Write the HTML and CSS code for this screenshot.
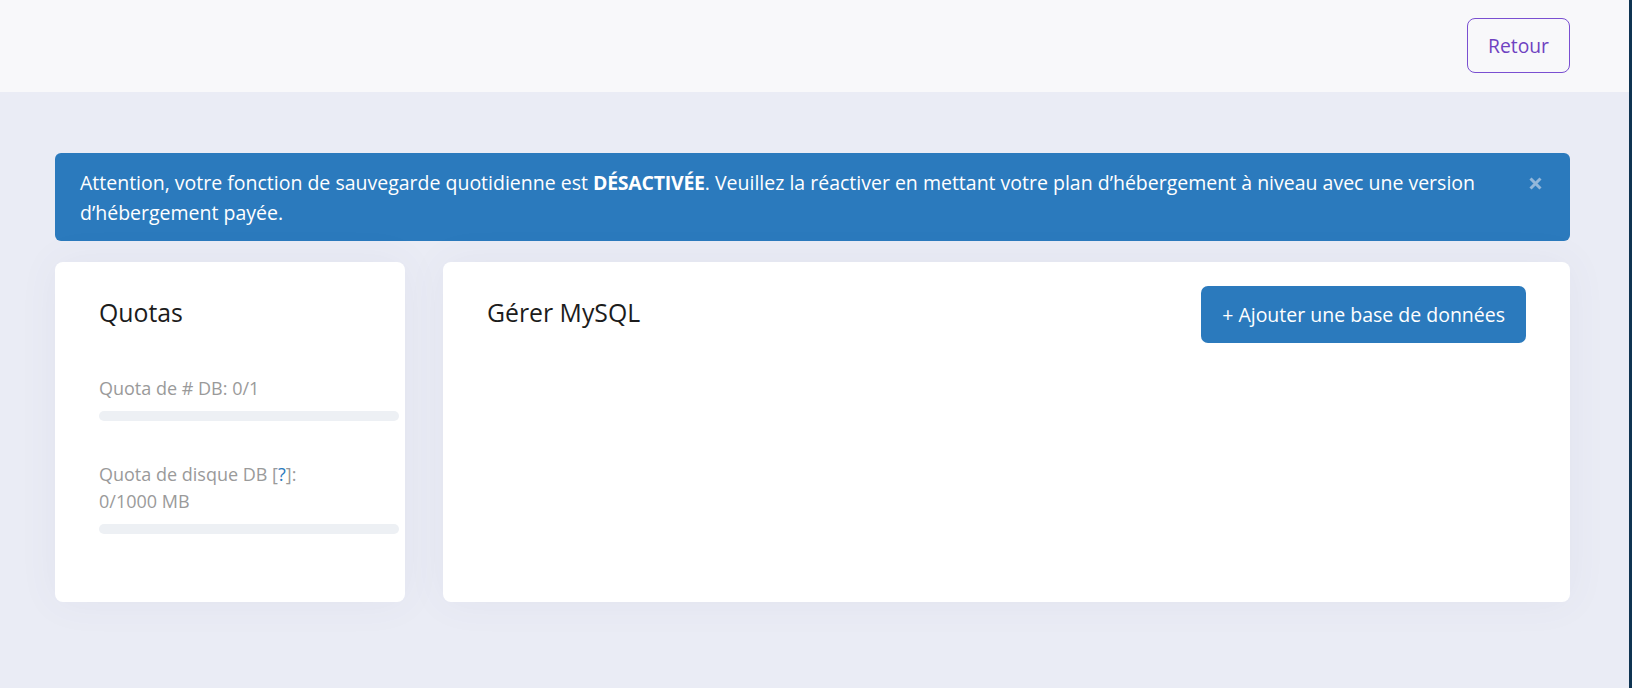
FILE: index.html
```html
<!DOCTYPE html>
<html lang="fr">
<head>
<meta charset="utf-8">
<title>Gérer MySQL</title>
<link rel="stylesheet" href="styles.css">
</head>
<body>
<div class="page">
  <header class="topbar">
    <a class="btn-back" href="#">Retour</a>
  </header>
  <main class="content">
    <div class="alert">
      <p class="alert-text">Attention, votre fonction de sauvegarde quotidienne est <strong>DÉSACTIVÉE</strong>. Veuillez la réactiver en mettant votre plan d’hébergement à niveau avec une version d’hébergement payée.</p>
      <span class="alert-close" aria-label="Fermer">
        <svg width="13" height="13" viewBox="0 0 13 13"><path d="M1.5 1.5 L11.5 11.5 M11.5 1.5 L1.5 11.5" stroke="currentColor" stroke-width="3" stroke-linecap="butt" fill="none"/></svg>
      </span>
    </div>
    <div class="grid">
      <section class="card quotas">
        <div class="card-head">
          <h2 class="card-title">Quotas</h2>
        </div>
        <div class="quota">
          <div class="quota-label">Quota de # DB: 0/1</div>
          <div class="bar"><div class="bar-fill" style="width:0%"></div></div>
        </div>
        <div class="quota">
          <div class="quota-label">Quota de disque DB [<a href="#" class="help">?</a>]:<br>0/1000 MB</div>
          <div class="bar"><div class="bar-fill" style="width:0%"></div></div>
        </div>
      </section>
      <section class="card mysql">
        <div class="card-head">
          <h2 class="card-title">Gérer MySQL</h2>
          <a class="btn-primary" href="#">+ Ajouter une base de données</a>
        </div>
      </section>
    </div>
  </main>
</div>
</body>
</html>
```
FILE: styles.css
```css
html {
  background: #0f3452;
}
body {
  margin: 0 3px 0 0;
  min-height: 688px;
  background: #eaecf5;
  font-family: "Open Sans", "Noto Sans", sans-serif;
  color: #222;
}
.page {
  min-height: 688px;
}
.topbar {
  height: 92px;
  background: #f8f8fa;
  display: flex;
  align-items: center;
  justify-content: flex-end;
  padding: 0 59px 0 55px;
  box-sizing: border-box;
}
.btn-back {
  display: flex;
  align-items: center;
  justify-content: center;
  width: 103px;
  height: 55px;
  margin-top: -1px;
  box-sizing: border-box;
  border: 1px solid #7a4fd1;
  border-radius: 8px;
  color: #6f42c1;
  font-size: 19.3px;
  text-decoration: none;
  background: transparent;
}
.content {
  padding: 61px 59px 0 55px;
}
.alert {
  display: flex;
  align-items: flex-start;
  background: #2b7abd;
  color: #fff;
  border-radius: 6px;
  padding: 15px 28px 13px 25px;
}
.alert-text {
  flex: 1;
  margin: 0 20px 0 0;
  font-size: 19.5px;
  line-height: 30px;
}
.alert-text strong {
  font-weight: 700;
  letter-spacing: -0.25px;
}
.alert-close {
  display: flex;
  align-items: center;
  height: 30px;
  color: #93b7da;
}
.alert-close svg {
  display: block;
}
.grid {
  margin-top: 21px;
  display: grid;
  grid-template-columns: 350px 1fr;
  gap: 38px;
}
.card {
  background: #fff;
  border-radius: 8px;
  box-shadow: 0 0 40px rgba(80, 80, 140, 0.06);
  padding: 24px 44px 68px 44px;
  min-height: 340px;
  box-sizing: border-box;
}
.card-head {
  display: flex;
  align-items: center;
  justify-content: space-between;
  min-height: 57px;
}
.card-title {
  margin: 0 0 6px 0;
  font-size: 24.8px;
  font-weight: 400;
  line-height: 36px;
  color: #1c1c1c;
}
.btn-primary {
  display: flex;
  align-items: center;
  height: 57px;
  box-sizing: border-box;
  padding: 0 21px;
  background: #2b7abd;
  color: #fff;
  border-radius: 7px;
  font-size: 19.5px;
  text-decoration: none;
}
.quotas .card-head {
  margin-bottom: 32px;
}
.quota {
  margin-bottom: 40px;
}
.quota:last-child {
  margin-bottom: 0;
}
.quota-label {
  font-size: 18px;
  line-height: 27px;
  color: #9a9a9a;
}
.help {
  color: #2b7abd;
  text-decoration: none;
}
.bar {
  margin-top: 9px;
  width: 300px;
  height: 10px;
  border-radius: 5px;
  background: #edf0f4;
  overflow: hidden;
}
.bar-fill {
  height: 100%;
  background: #2b7abd;
}
```
